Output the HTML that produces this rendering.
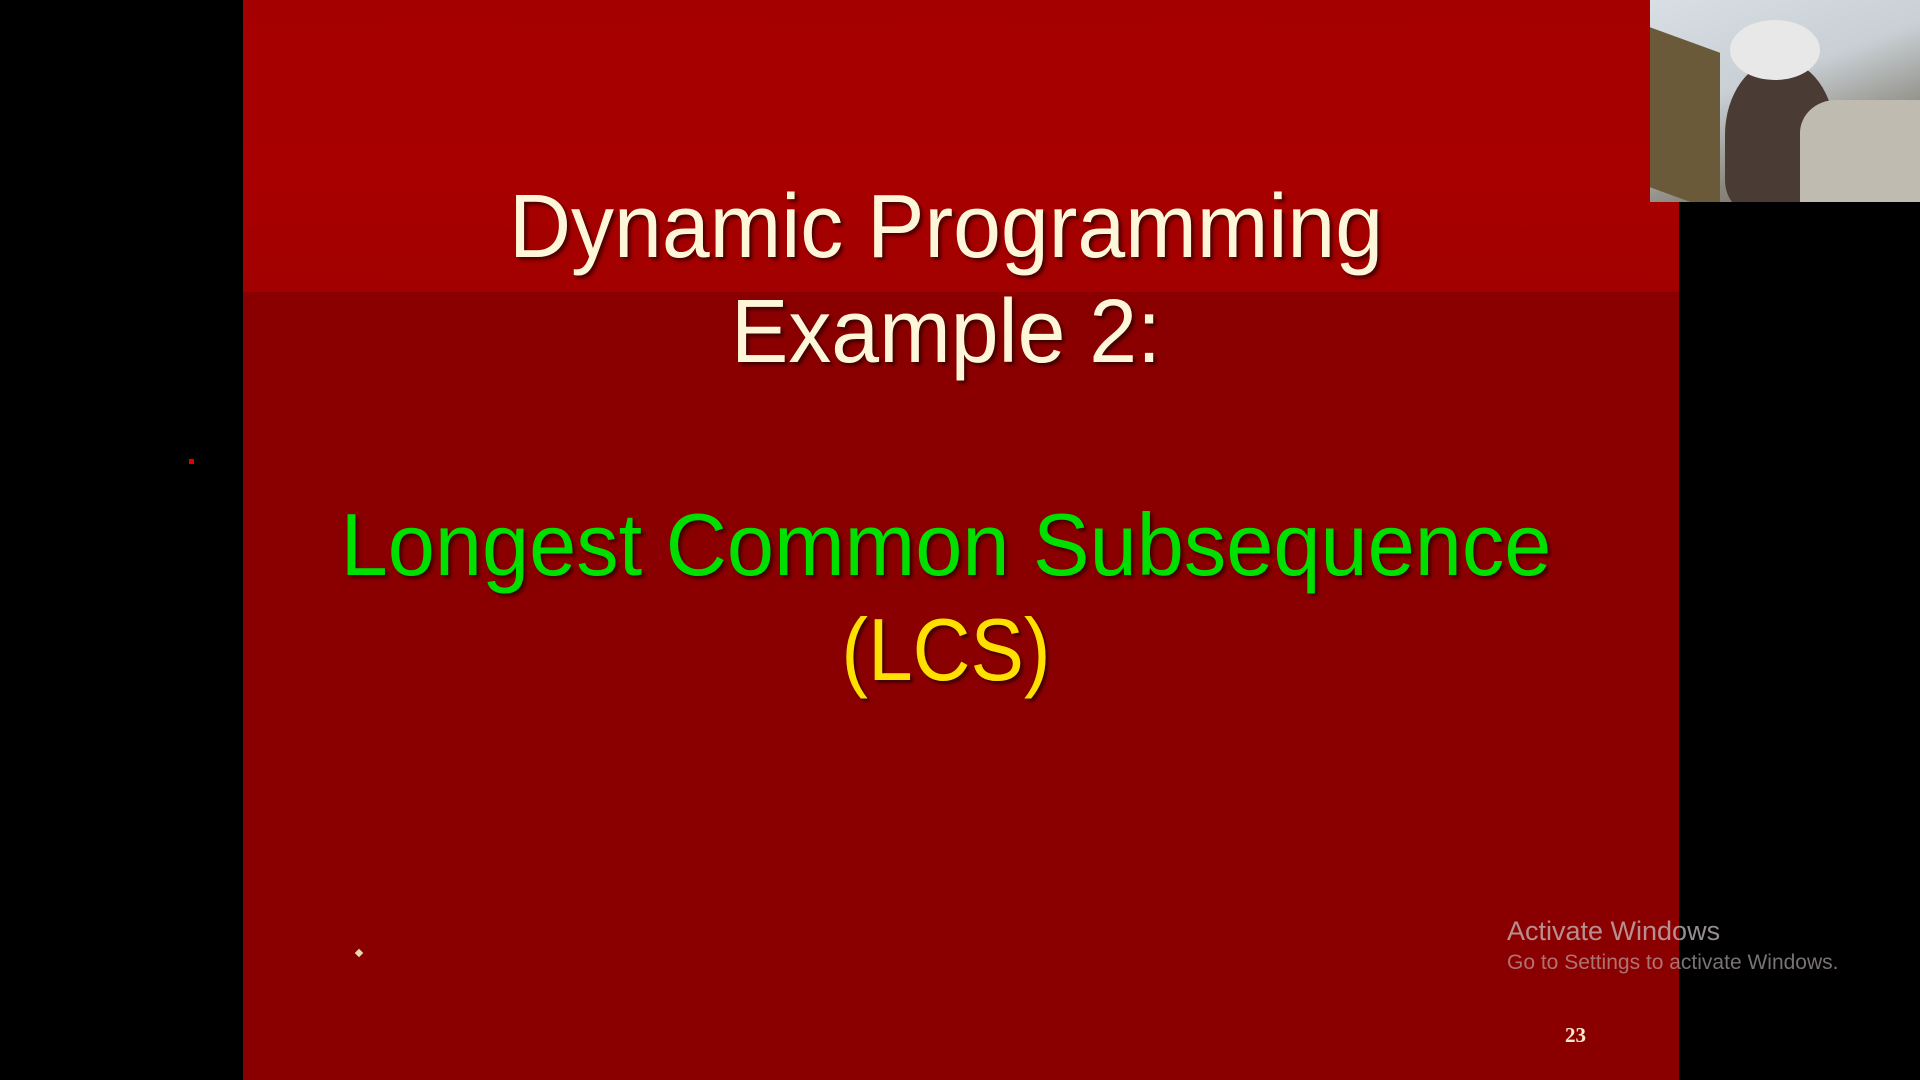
<!DOCTYPE html>
<html><head><style>
html,body{margin:0;padding:0;width:1920px;height:1080px;background:#000;overflow:hidden;font-family:"Liberation Sans",sans-serif}
.slide{position:absolute;left:243px;top:0;width:1436px;height:1080px;background:#8a0000}
.band{position:absolute;left:0;top:0;width:100%;height:292px;background:linear-gradient(180deg,#a50000 0%,#a80000 60%,#a20000 100%)}
.t{position:absolute;left:-15px;width:1436px;text-align:center;white-space:nowrap;text-shadow:3px 3px 3px rgba(40,0,0,.7)}
.w{color:#fdf6d8;font-size:90px;transform:scaleX(.955)}
.g{color:#00e000;font-size:88px;transform:scaleX(.963)}
.y{color:#ffe000;font-size:88px;transform:scaleX(.91)}
.cam{position:absolute;left:1650px;top:0;width:270px;height:202px;background:linear-gradient(160deg,#d8dfe4 0%,#c9d0d5 40%,#8d8a80 70%,#5a554e 100%);overflow:hidden}
.aw{position:absolute;left:1507px;top:916px;color:rgba(200,190,190,.75);font-size:27px}
.aw2{position:absolute;left:1507px;top:951px;color:rgba(200,190,190,.6);font-size:21px}
</style></head><body>
<div class="slide"><div class="band"></div>
<div class="t w" style="top:176px">Dynamic Programming</div>
<div class="t w" style="top:281px">Example 2:</div>
<div class="t g" style="top:494px">Longest Common Subsequence</div>
<div class="t y" style="top:599px">(LCS)</div>
<div style="position:absolute;left:1322px;top:1023px;color:#f5e8d0;font-size:21px;font-weight:bold;font-family:'Liberation Serif',serif">23</div>
<div style="position:absolute;left:113px;top:950px;width:6px;height:6px;background:#e8d8b0;transform:rotate(45deg)"></div>
</div>
<div style="position:absolute;left:189px;top:459px;width:5px;height:5px;background:#e00000"></div>
<div class="cam">
<div style="position:absolute;left:0;top:40px;width:70px;height:160px;background:#6a5a3a;transform:skewY(20deg)"></div>
<div style="position:absolute;left:75px;top:60px;width:110px;height:150px;border-radius:50% 50% 20% 20%;background:#4a3c35"></div>
<div style="position:absolute;left:80px;top:20px;width:90px;height:60px;border-radius:50%;background:#e8e8e8"></div>
<div style="position:absolute;left:150px;top:100px;width:120px;height:110px;background:#c0bbb0;border-radius:30% 0 0 0"></div>
</div>
<div class="aw">Activate Windows</div>
<div class="aw2">Go to Settings to activate Windows.</div>
</body></html>
